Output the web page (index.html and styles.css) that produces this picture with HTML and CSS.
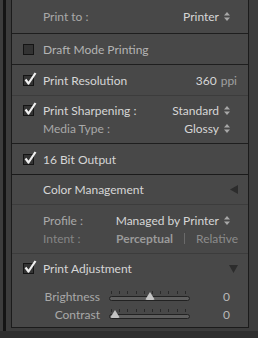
FILE: index.html
```html
<!DOCTYPE html>
<html>
<head>
<meta charset="utf-8">
<link rel="stylesheet" href="styles.css">
</head>
<body>
<div class="page">
  <div class="strip"></div>
  <div class="panel">
    <div class="row r1 dark">
      <span class="label dim">Print to :</span>
      <span class="value">Printer <svg class="updown" width="6" height="9" viewBox="0 0 6 9"><path d="M3 0L6 3.5H0Z M3 9L6 5.5H0Z" fill="#a8a8a8"/></svg></span>
    </div>
    <div class="row r2 dark">
      <span class="cb"></span>
      <span class="label dim2">Draft Mode Printing</span>
    </div>
    <div class="row r3 soft">
      <span class="cb on"><svg width="14" height="14" viewBox="0 0 14 14"><path d="M2.5 7.5L5.5 11.5L12.5 1" fill="none" stroke="#f0f0f0" stroke-width="2.2" stroke-linejoin="round"/></svg></span>
      <span class="label">Print Resolution</span>
      <span class="value num">360 <span class="unit">ppi</span></span>
    </div>
    <div class="row r4 dark">
      <div class="line">
        <span class="cb on"><svg width="14" height="14" viewBox="0 0 14 14"><path d="M2.5 7.5L5.5 11.5L12.5 1" fill="none" stroke="#f0f0f0" stroke-width="2.2" stroke-linejoin="round"/></svg></span>
        <span class="label">Print Sharpening :</span>
        <span class="value">Standard <svg class="updown" width="6" height="9" viewBox="0 0 6 9"><path d="M3 0L6 3.5H0Z M3 9L6 5.5H0Z" fill="#a8a8a8"/></svg></span>
      </div>
      <div class="line sub indent">
        <span class="label dim">Media Type :</span>
        <span class="value">Glossy <svg class="updown" width="6" height="9" viewBox="0 0 6 9"><path d="M3 0L6 3.5H0Z M3 9L6 5.5H0Z" fill="#a8a8a8"/></svg></span>
      </div>
    </div>
    <div class="row r5 black">
      <span class="cb on"><svg width="14" height="14" viewBox="0 0 14 14"><path d="M2.5 7.5L5.5 11.5L12.5 1" fill="none" stroke="#f0f0f0" stroke-width="2.2" stroke-linejoin="round"/></svg></span>
      <span class="label">16 Bit Output</span>
    </div>
    <div class="row r6 soft">
      <span class="label head">Color Management</span>
      <svg class="tri" width="8" height="9" viewBox="0 0 8 9"><path d="M0 4.5L8 0V9Z" fill="#2c2c2c"/></svg>
    </div>
    <div class="row r7 soft">
      <div class="line">
        <span class="label dim">Profile :</span>
        <span class="value">Managed by Printer <svg class="updown" width="6" height="9" viewBox="0 0 6 9"><path d="M3 0L6 3.5H0Z M3 9L6 5.5H0Z" fill="#a8a8a8"/></svg></span>
      </div>
      <div class="line sub intent">
        <span class="label dim3">Intent :</span>
        <span class="seg">
          <span class="opt sel">Perceptual</span>
          <span class="bar"></span>
          <span class="opt">Relative</span>
        </span>
      </div>
    </div>
    <div class="row r8">
      <div class="line">
        <span class="cb on"><svg width="14" height="14" viewBox="0 0 14 14"><path d="M2.5 7.5L5.5 11.5L12.5 1" fill="none" stroke="#f0f0f0" stroke-width="2.2" stroke-linejoin="round"/></svg></span>
        <span class="label">Print Adjustment</span>
        <svg class="tri" width="9" height="8" viewBox="0 0 9 8"><path d="M0 0H9L4.5 8Z" fill="#2c2c2c"/></svg>
      </div>
      <div class="slide first">
        <span class="sname">Brightness</span>
        <div class="track"><div class="ticks"></div><div class="rail"></div><span class="thumb" style="left:41px"></span></div>
        <span class="sval">0</span>
      </div>
      <div class="slide">
        <span class="sname">Contrast</span>
        <div class="track"><div class="ticks"></div><div class="rail"></div><span class="thumb" style="left:6px"></span></div>
        <span class="sval">0</span>
      </div>
    </div>
  </div>
  <div class="rgap"></div>
</div>
<div class="foot"></div>
</body>
</html>
```
FILE: styles.css
```css
html, body {
  margin: 0;
  padding: 0;
}
body {
  width: 258px;
  height: 338px;
  background: #3c3c3c;
  font-family: Lato, "Open Sans", sans-serif;
  font-size: 12px;
  color: #d6d6d6;
  overflow: hidden;
}
.page {
  display: flex;
  height: 331px;
}
.strip {
  width: 3px;
  margin-left: 3px;
  margin-right: 5px;
  background: #141414;
}
.panel {
  width: 236px;
  height: 327px;
  background: #484848;
  border: 1px solid #1b1b1b;
  border-top: 0;
  display: flex;
  flex-direction: column;
}
.rgap {
  width: 3px;
}
.foot {
  height: 7px;
  background: #2e2e2e;
}
.row {
  display: flex;
  align-items: center;
  padding: 0 10px 0 11px;
  position: relative;
  flex: none;
}
.row.dark { border-bottom: 1px solid #1e1e1e; }
.row.black { border-bottom: 1px solid #1a1a1a; }
.row.soft { border-bottom: 1px solid #3c3c3c; }
.r1 { height: 33px; padding-left: 31px; }
.r2 { height: 30px; }
.r3 { height: 30px; }
.r4 { height: 47px; flex-direction: column; align-items: stretch; justify-content: center; }
.r5 { height: 30px; }
.r6 { height: 29px; padding-left: 31px; }
.r7 { height: 48px; flex-direction: column; align-items: stretch; justify-content: center; padding-left: 31px; }
.r8 { flex: 1; flex-direction: column; align-items: stretch; padding-top: 6px; }
.line {
  display: flex;
  align-items: center;
  height: 18px;
}
.line.indent { padding-left: 20px; }
.r8 .line { height: 17px; }
.label { white-space: nowrap; }
.dim { color: #a9a9a9; }
.dim2 { color: #b4b4b4; }
.dim3 { color: #858585; }
.head { color: #d6d6d6; }
.value {
  margin-left: auto;
  display: flex;
  align-items: center;
  gap: 5px;
  white-space: nowrap;
  color: #d6d6d6;
}
.num { gap: 0; margin-right: 1px; }
.unit { color: #a0a0a0; margin-left: 4px; }
.updown { margin-right: 8px; }
.cb {
  width: 9px;
  height: 9px;
  border: 1px solid #141414;
  background: #333;
  margin-right: 9px;
  position: relative;
  flex: none;
}
.cb svg {
  position: absolute;
  left: -1px;
  top: -4px;
}
.tri { margin-left: auto; margin-right: 0px; }
.intent .seg {
  margin-left: auto;
  display: flex;
  align-items: center;
}
.opt { color: #8c8c8c; }
.opt.sel { color: #9a9a9a; font-weight: bold; }
.bar {
  width: 1px;
  height: 11px;
  background: #6a6a6a;
  margin: 0 11px;
}
.slide {
  display: flex;
  align-items: center;
  height: 18px;
}
.slide.first { margin-top: 10px; }
.sname {
  width: 77px;
  text-align: right;
  color: #a9a9a9;
  margin-right: 9px;
}
.track {
  position: relative;
  width: 81px;
  height: 18px;
}
.ticks {
  position: absolute;
  left: 2px;
  right: 2px;
  top: 4px;
  height: 3px;
  background: repeating-linear-gradient(90deg, #2a2a2a 0 1px, transparent 1px 8.2px);
}
.rail {
  position: absolute;
  left: 0;
  right: 0;
  top: 9px;
  height: 3px;
  border: 1px solid #222;
  border-radius: 3px;
  background: #5e5e5e;
}
.thumb {
  position: absolute;
  top: 5px;
  width: 10px;
  height: 8px;
  margin-left: -5px;
  background: #c4c4c4;
  clip-path: polygon(50% 0, 100% 100%, 0 100%);
  border-radius: 0 0 2px 2px;
}
.sval {
  margin-left: auto;
  margin-right: 8px;
  color: #b8b8b8;
}
```
